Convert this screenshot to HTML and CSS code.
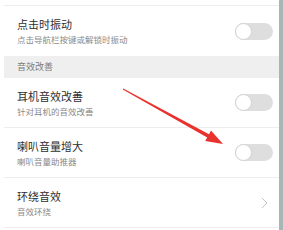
FILE: index.html
```html
<!DOCTYPE html>
<html lang="zh">
<head>
<meta charset="utf-8">
<link rel="stylesheet" href="styles.css">
</head>
<body>
<div class="screen">
  <div class="panel">
    <div class="top"></div>
    <div class="row first">
      <div class="texts">
        <div class="title">点击时振动</div>
        <div class="sub">点击导航栏按键或解锁时振动</div>
      </div>
      <div class="toggle"><span class="knob"></span></div>
    </div>
    <div class="section">音效改善</div>
    <div class="row">
      <div class="texts">
        <div class="title">耳机音效改善</div>
        <div class="sub">针对耳机的音效改善</div>
      </div>
      <div class="toggle"><span class="knob"></span></div>
    </div>
    <div class="row">
      <div class="texts">
        <div class="title">喇叭音量增大</div>
        <div class="sub">喇叭音量助推器</div>
      </div>
      <div class="toggle"><span class="knob"></span></div>
    </div>
    <div class="row">
      <div class="texts">
        <div class="title">环绕音效</div>
        <div class="sub">音效环绕</div>
      </div>
      <svg class="chev" width="7" height="12" viewBox="0 0 7 12"><path d="M1 1 L6 6 L1 11" fill="none" stroke="#c4c4c4" stroke-width="1"/></svg>
    </div>
  </div>
  <div class="edge"></div>
  <svg class="arrow" width="283" height="230" viewBox="0 0 283 230">
    <polygon points="123.24,88.56 209.0,134.2 211.0,130.5 223,144 205.2,141.1 207.2,137.4 122.76,89.44" fill="#e8322d"/>
  </svg>
</div>
</body>
</html>
```
FILE: styles.css
```css
html, body {
  margin: 0;
  padding: 0;
  background: #ffffff;
}
body {
  font-family: "Noto Sans CJK SC", "Noto Sans", sans-serif;
}
.screen {
  position: relative;
  width: 283px;
  height: 230px;
  overflow: hidden;
  display: flex;
  background: #ffffff;
}
.panel {
  margin-left: 4px;
  width: 275px;
  display: flex;
  flex-direction: column;
}
.top {
  height: 5px;
  border-bottom: 1px solid #ededed;
}
.row {
  height: 49px;
  border-bottom: 1px solid #ededed;
  display: flex;
  align-items: center;
  justify-content: space-between;
  padding: 0 6px 0 13px;
}
.row.first {
  height: 50px;
  border-bottom: none;
}
.texts {
  display: flex;
  flex-direction: column;
  gap: 3px;
}
.title {
  font-size: 11px;
  line-height: 14px;
  color: #2f2f2f;
}
.sub {
  font-size: 8.5px;
  line-height: 11px;
  color: #8a8a8a;
}
.section {
  height: 22px;
  background: #efefef;
  font-size: 9px;
  line-height: 22px;
  color: #7a7a7a;
  padding-left: 13px;
}
.toggle {
  width: 38px;
  height: 17px;
  border-radius: 9px;
  background: #dedede;
  position: relative;
}
.knob {
  position: absolute;
  left: 0;
  top: 0;
  width: 15px;
  height: 15px;
  border-radius: 50%;
  background: #ffffff;
  border: 1px solid #d2d2d2;
}
.chev {
  margin-right: 5px;
}
.edge {
  width: 4px;
  background: #a9b4b5;
}
.arrow {
  position: absolute;
  left: 0;
  top: 0;
}
```
